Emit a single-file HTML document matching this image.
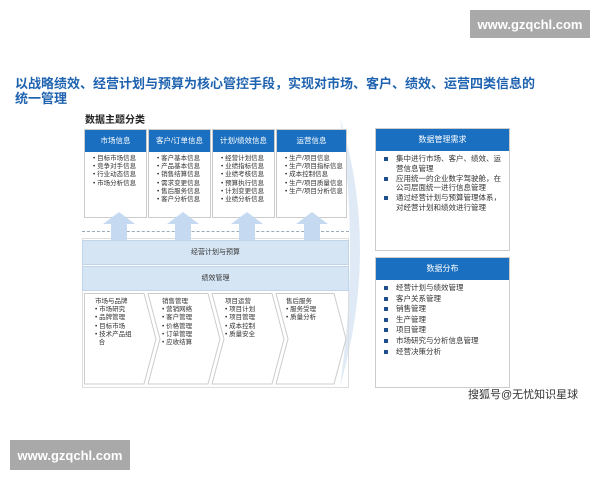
<!DOCTYPE html>
<html><head><meta charset="utf-8"><style>
*{margin:0;padding:0;box-sizing:border-box}
body{width:600px;height:480px;background:#fff;position:relative;overflow:hidden;font-family:"Liberation Sans","Noto Sans CJK SC",sans-serif;color:#333}
.a{position:absolute}
.wm{background:#a9a9a9;color:#fff;font-size:13px;font-weight:bold;display:flex;align-items:center;justify-content:center}
.title{left:15px;top:76px;font-size:13px;font-weight:bold;color:#1f63b0;line-height:15px;width:560px}
.tb{top:129px;width:63px;height:89px;border:1px solid #ccc;background:#fff}
.tb .h{background:#1a6fc0;color:#fff;font-size:7.5px;text-align:center;height:22px;line-height:22px}
.tb ul{list-style:none;font-size:6.5px;line-height:8.2px;padding:3px 0 0 8px}
.tb li:before{content:"• ";}
.band{left:82px;width:267px;background:#d6e5f4;border:1px solid #c0d4ea;font-size:7px;text-align:center}
.ch{top:298px;height:90px;font-size:6.5px;line-height:8.2px}
.rb{left:375px;width:135px;border:1px solid #ccc;background:#fff}
.rb .h{background:#1a6fc0;color:#fff;font-size:8px;text-align:center;height:22px;line-height:22px}
.rb ul{list-style:none;font-size:7.5px;line-height:9.8px;padding:3px 4px 0 6px}
.rb li{padding-left:14px;position:relative}
.rb li:before{content:"";position:absolute;left:2px;top:3px;width:4px;height:4px;background:#1f4e8c}
</style></head><body>
<div class="a wm" style="left:470px;top:10px;width:120px;height:28px">www.gzqchl.com</div>
<div class="a wm" style="left:10px;top:440px;width:120px;height:30px">www.gzqchl.com</div>
<div class="a title">以战略绩效、经营计划与预算为核心管控手段，实现对市场、客户、绩效、运营四类信息的<br>统一管理</div>
<div class="a" style="left:85px;top:111px;font-size:10px;font-weight:bold;color:#222">数据主题分类</div>
<svg class="a" style="left:330px;top:118px" width="50" height="270"><path d="M10 0 Q50 130 10 268 Q30 130 10 0Z" fill="#dfeaf6"/></svg>
<div class="a" style="left:82px;top:238px;width:267px;height:150px;border:1px solid #ddd"></div>
<div class="a tb" style="left:84px"><div class="h">市场信息</div><ul><li>目标市场信息</li><li>竞争对手信息</li><li>行业动态信息</li><li>市场分析信息</li></ul></div>
<div class="a tb" style="left:148px"><div class="h">客户/订单信息</div><ul><li>客户基本信息</li><li>产品基本信息</li><li>销售结算信息</li><li>需求变更信息</li><li>售后服务信息</li><li>客户分析信息</li></ul></div>
<div class="a tb" style="left:212px"><div class="h">计划/绩效信息</div><ul><li>经营计划信息</li><li>业绩指标信息</li><li>业绩考核信息</li><li>预算执行信息</li><li>计划变更信息</li><li>业绩分析信息</li></ul></div>
<div class="a tb" style="left:276px;width:71px"><div class="h">运营信息</div><ul><li>生产/项目信息</li><li>生产/项目指标信息</li><li>成本控制信息</li><li>生产/项目质量信息</li><li>生产/项目分析信息</li></ul></div>
<div class="a" style="left:82px;top:231px;width:267px;border-top:1px dashed #9ab"></div>
<svg class="a" style="left:82px;top:212px" width="267" height="28">
<g fill="#c5daf0"><path d="M29 28V12H21L37 0L53 12H45V28Z"/><path d="M93 28V12H85L101 0L117 12H109V28Z"/><path d="M157 28V12H149L165 0L181 12H173V28Z"/><path d="M222 28V12H214L230 0L246 12H238V28Z"/></g></svg>
<div class="a band" style="top:240px;height:25px;line-height:24px">经营计划与预算</div>
<div class="a band" style="top:266px;height:25px;line-height:24px">绩效管理</div>
<svg class="a" style="left:84px;top:293px" width="265" height="92" fill="none" stroke="#ccc" stroke-width="1">
<path d="M0.5 .5H60L72 46L60 91H0.5Z"/><path d="M64 .5H124L136 46L124 91H76L64 91L76 46Z"/><path d="M128 .5H188L200 46L188 91H128L140 46Z"/><path d="M192 .5H250L262 46L250 91H192L204 46Z"/></svg>
<div class="a ch" style="left:95px">市场与品牌<br>• 市场研究<br>• 品牌管理<br>• 目标市场<br>• 技术产品组<br>&nbsp;&nbsp;合</div>
<div class="a ch" style="left:162px">销售管理<br>• 营销网络<br>• 客户管理<br>• 价格管理<br>• 订单管理<br>• 应收结算</div>
<div class="a ch" style="left:225px">项目运营<br>• 项目计划<br>• 项目管理<br>• 成本控制<br>• 质量安全</div>
<div class="a ch" style="left:286px">售后服务<br>• 服务受理<br>• 质量分析</div>
<div class="a rb" style="top:128px;height:123px"><div class="h">数据管理需求</div><ul><li>集中进行市场、客户、绩效、运营信息管理</li><li>应用统一的企业数字驾驶舱，在公司层面统一进行信息管理</li><li>通过经营计划与预算管理体系，对经营计划和绩效进行管理</li></ul></div>
<div class="a rb" style="top:257px;height:131px"><div class="h">数据分布</div><ul style="line-height:10.6px"><li>经营计划与绩效管理</li><li>客户关系管理</li><li>销售管理</li><li>生产管理</li><li>项目管理</li><li>市场研究与分析信息管理</li><li>经营决策分析</li></ul></div>
<div class="a" style="left:468px;top:386px;font-size:11px;color:#333">搜狐号@无忧知识星球</div>
</body></html>
